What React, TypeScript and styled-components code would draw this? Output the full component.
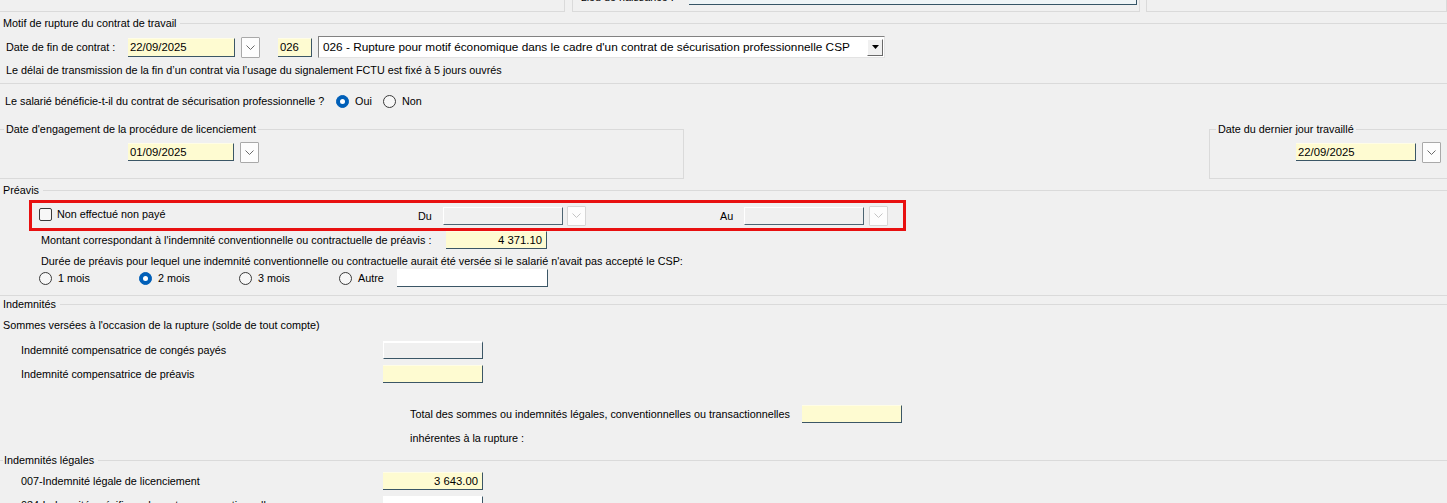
import React from "react";
import styled, { createGlobalStyle, css } from "styled-components";

const GlobalStyle = createGlobalStyle`
  html, body {
    margin: 0;
    padding: 0;
    background: #f0f0f0;
  }
  body {
    font-family: "Liberation Sans", Arial, sans-serif;
    font-size: 10.8px;
    color: #000;
  }
`;

const Page = styled.div`
  width: 1447px;
  height: 503px;
  overflow: hidden;
  background: #f0f0f0;
  display: flex;
  flex-direction: column;
`;

/* ---------- top strip (end of previous panels) ---------- */

const TopStrip = styled.div`
  height: 12px;
  display: flex;
  overflow: hidden;
  flex-shrink: 0;
`;

const Panel = styled.div<{ $w: number; $ml?: number; $left?: boolean }>`
  width: ${(p) => p.$w}px;
  margin-left: ${(p) => p.$ml ?? 0}px;
  height: 11px;
  border-bottom: 1px solid #dadada;
  border-right: 1px solid #dadada;
  ${(p) => p.$left && "border-left: 1px solid #dadada;"}
  box-sizing: content-box;
  display: flex;
  align-items: flex-end;
  overflow: hidden;
`;

const BirthRow = styled.div`
  display: flex;
  align-items: flex-end;
  height: 20px;
  margin-bottom: 6px;
  padding-left: 8px;
  white-space: nowrap;
`;

const BirthLabel = styled.span`
  width: 108px;
  line-height: 14px;
  margin-bottom: 1px;
`;

const BirthInput = styled.div`
  width: 447px;
  height: 18px;
  background: #eef4f6;
  border-right: 1px solid #355466;
  border-bottom: 1px solid #355466;
`;

/* ---------- group titles & separators ---------- */

const TitleRow = styled.div<{ $mt: number }>`
  display: flex;
  align-items: center;
  height: 14px;
  margin-top: ${(p) => p.$mt}px;
  flex-shrink: 0;
`;

const TitleText = styled.span<{ $lead: number }>`
  white-space: nowrap;
  padding: 0 4px 0 ${(p) => (p.$lead ? 1 : 3)}px;
  line-height: 14px;
`;

const Rule = styled.div<{ $w?: number }>`
  height: 1px;
  background: #dadada;
  ${(p) => (p.$w !== undefined ? `width: ${p.$w}px;` : "flex: 1;")}
`;

const Separator = styled.div<{ $mt: number }>`
  height: 1px;
  background: #dadada;
  margin-top: ${(p) => p.$mt}px;
  flex-shrink: 0;
`;

/* ---------- rows & text ---------- */

const Row = styled.div<{ $mt: number; $h?: number; $pl?: number }>`
  display: flex;
  align-items: center;
  margin-top: ${(p) => p.$mt}px;
  height: ${(p) => p.$h ?? 14}px;
  padding-left: ${(p) => p.$pl ?? 0}px;
  white-space: nowrap;
  flex-shrink: 0;
`;

const Label = styled.span<{ $w?: number }>`
  line-height: 14px;
  ${(p) => p.$w !== undefined && `width: ${p.$w}px; flex-shrink: 0;`}
`;

const Gap = styled.span<{ $w: number }>`
  width: ${(p) => p.$w}px;
  flex-shrink: 0;
`;

/* ---------- inputs ---------- */

type Tone = "yellow" | "white" | "disabled" | "gray";

const Field = styled.div<{ $w: number; $h?: number; $tone: Tone; $right?: boolean }>`
  width: ${(p) => p.$w}px;
  height: ${(p) => p.$h ?? 18}px;
  box-sizing: border-box;
  flex-shrink: 0;
  display: flex;
  align-items: center;
  justify-content: ${(p) => (p.$right ? "flex-end" : "flex-start")};
  padding: 0 4px 0 2px;
  line-height: 14px;
  font-size: 11.3px;
  border-right: 1px solid #3b5666;
  border-bottom: 1px solid #3b5666;
  border-top: 1px solid transparent;
  ${(p) =>
    p.$tone === "yellow" &&
    css`
      background: #fefbd1;
      border-top-color: #fffde6;
    `}
  ${(p) =>
    p.$tone === "white" &&
    css`
      background: #ffffff;
    `}
  ${(p) =>
    p.$tone === "gray" &&
    css`
      background: #f0f0f0;
      border-top: 2px solid #ffffff;
      border-left: 1px solid #ffffff;
    `}
  ${(p) =>
    p.$tone === "disabled" &&
    css`
      background: #f0f0f0;
      border-top: 1px solid #ffffff;
      border-left: 1px solid #ffffff;
      border-right-color: #4c6472;
      border-bottom-color: #4c6472;
    `}
`;

const DropButton = styled.div<{ $off?: boolean; $h?: number }>`
  width: 19px;
  height: ${(p) => p.$h ?? 21}px;
  box-sizing: border-box;
  flex-shrink: 0;
  background: #fdfdfd;
  border: 1px solid ${(p) => (p.$off ? "#d6d6d6" : "#a9a9a9")};
  border-radius: 1px;
  display: flex;
  align-items: center;
  justify-content: center;
  svg {
    stroke: ${(p) => (p.$off ? "#c4c4c4" : "#6a6a6a")};
  }
`;

const Chevron = () => (
  <svg width="9" height="5" viewBox="0 0 9 5" fill="none" strokeWidth="1">
    <polyline points="0.5,0.5 4.5,4.5 8.5,0.5" />
  </svg>
);

const DateButton = ({ off, h }: { off?: boolean; h?: number }) => (
  <DropButton $off={off} $h={h}>
    <Chevron />
  </DropButton>
);

const Combo = styled.div`
  width: 567px;
  height: 22px;
  box-sizing: border-box;
  background: #fff;
  border-top: 1px solid #828282;
  border-left: 1px solid #828282;
  border-right: 1px solid #e3e3e3;
  border-bottom: 1px solid #e3e3e3;
  display: flex;
  align-items: center;
  justify-content: space-between;
  padding: 0 1px 0 4px;
  flex-shrink: 0;
  font-size: 11.8px;
`;

const ComboArrow = styled.div`
  width: 16px;
  height: 17px;
  box-sizing: border-box;
  background: #f0f0f0;
  border-top: 1px solid #ffffff;
  border-left: 1px solid #ffffff;
  border-right: 1px solid #696969;
  border-bottom: 1px solid #696969;
  display: flex;
  align-items: center;
  justify-content: center;
`;

/* ---------- radios & checkbox ---------- */

const RadioDot = styled.span<{ $on?: boolean }>`
  width: 13px;
  height: 13px;
  box-sizing: border-box;
  border-radius: 50%;
  flex-shrink: 0;
  border: 1px solid ${(p) => (p.$on ? "#005fb8" : "#3a3a3a")};
  background: ${(p) => (p.$on ? "#005fb8" : "#f7f7f7")};
  display: flex;
  align-items: center;
  justify-content: center;
  &::after {
    content: "";
    width: 5px;
    height: 5px;
    border-radius: 50%;
    background: #fff;
    display: ${(p) => (p.$on ? "block" : "none")};
  }
`;

const RadioOption = styled.span<{ $w?: number }>`
  display: inline-flex;
  align-items: center;
  gap: 6px;
  ${(p) => p.$w !== undefined && `width: ${p.$w}px; flex-shrink: 0;`}
`;

const Radio = ({ on, label, w }: { on?: boolean; label: string; w?: number }) => (
  <RadioOption $w={w}>
    <RadioDot $on={on} />
    <Label>{label}</Label>
  </RadioOption>
);

const CheckBox = styled.span`
  width: 13px;
  height: 13px;
  box-sizing: border-box;
  border: 1px solid #3a3a3a;
  border-radius: 2px;
  background: #f7f7f7;
  flex-shrink: 0;
`;

/* ---------- group boxes ---------- */

const BoxRow = styled.div`
  display: flex;
  justify-content: space-between;
  margin-top: 21px;
  flex-shrink: 0;
`;

const GroupBox = styled.div<{ $w: number; $ml?: number; $mr?: number }>`
  width: ${(p) => p.$w}px;
  height: 50px;
  box-sizing: border-box;
  margin-left: ${(p) => p.$ml ?? 0}px;
  margin-right: ${(p) => p.$mr ?? 0}px;
  border: 1px solid #dadada;
  display: flex;
  flex-direction: column;
`;

const Legend = styled.span<{ $ml: number }>`
  align-self: flex-start;
  margin: -8px 0 0 ${(p) => p.$ml}px;
  padding: 0 2px;
  background: #f0f0f0;
  line-height: 14px;
  white-space: nowrap;
`;

/* ---------- highlight frame ---------- */

const Highlight = styled.div`
  margin: 3px 0 0 29px;
  width: 877px;
  height: 31px;
  box-sizing: border-box;
  border: 3px solid #e81010;
  display: flex;
  align-items: center;
  flex-shrink: 0;
  white-space: nowrap;
`;

const CheckOption = styled.span`
  align-self: flex-start;
  margin: 4px 0 0 7px;
  width: 379px;
  display: inline-flex;
  align-items: center;
  gap: 5px;
  flex-shrink: 0;
`;

export default function App() {
  return (
    <>
      <GlobalStyle />
      <Page>
        <TopStrip>
          <Panel $w={567} $ml={-1} />
          <Panel $w={569} $ml={7} $left>
            <BirthRow>
              <BirthLabel>Lieu de naissance :</BirthLabel>
              <BirthInput />
            </BirthRow>
          </Panel>
          <Panel $w={300} $ml={6} $left />
        </TopStrip>

        <TitleRow $mt={4}>
          <TitleText $lead={0}>Motif de rupture du contrat de travail</TitleText>
          <Rule />
        </TitleRow>

        <Row $mt={6} $h={22} $pl={6}>
          <Label $w={122}>Date de fin de contrat :</Label>
          <Field $tone="yellow" $w={107} $h={19}>22/09/2025</Field>
          <Gap $w={6} />
          <DateButton />
          <Gap $w={18} />
          <Field $tone="yellow" $w={34} $h={19}>026</Field>
          <Gap $w={6} />
          <Combo>
            <span>
              026 - Rupture pour motif économique dans le cadre d'un contrat de sécurisation
              professionnelle CSP
            </span>
            <ComboArrow>
              <svg width="7" height="4" viewBox="0 0 7 4">
                <polygon points="0,0 7,0 3.5,4" fill="#000" />
              </svg>
            </ComboArrow>
          </Combo>
        </Row>

        <Row $mt={5} $pl={6}>
          <Label>
            Le délai de transmission de la fin d’un contrat via l’usage du signalement FCTU est
            fixé à 5 jours ouvrés
          </Label>
        </Row>

        <Separator $mt={6} />

        <Row $mt={10} $pl={5}>
          <Label $w={331}>Le salarié bénéficie-t-il du contrat de sécurisation professionnelle ?</Label>
          <Radio on label="Oui" w={47} />
          <Radio label="Non" />
        </Row>

        <BoxRow>
          <GroupBox $w={685} $ml={-1}>
            <Legend $ml={4}>Date d'engagement de la procédure de licenciement</Legend>
            <Row $mt={6} $h={20} $pl={128}>
              <Field $tone="yellow" $w={106}>01/09/2025</Field>
              <Gap $w={6} />
              <DateButton />
            </Row>
          </GroupBox>
          <GroupBox $w={240} $mr={-2}>
            <Legend $ml={6}>Date du dernier jour travaillé</Legend>
            <Row $mt={6} $h={20} $pl={86}>
              <Field $tone="yellow" $w={120}>22/09/2025</Field>
              <Gap $w={6} />
              <DateButton />
            </Row>
          </GroupBox>
        </BoxRow>

        <TitleRow $mt={4}>
          <TitleText $lead={0}>Préavis</TitleText>
          <Rule />
        </TitleRow>

        <Highlight>
          <CheckOption>
            <CheckBox />
            <Label>Non effectué non payé</Label>
          </CheckOption>
          <Label $w={25}>Du</Label>
          <Field $tone="disabled" $w={120}></Field>
          <Gap $w={4} />
          <DateButton off h={20} />
          <Gap $w={134} />
          <Label $w={24}>Au</Label>
          <Field $tone="disabled" $w={120}></Field>
          <Gap $w={5} />
          <DateButton off h={20} />
        </Highlight>

        <Row $mt={0} $h={18} $pl={41}>
          <Label $w={405}>
            Montant correspondant à l'indemnité conventionnelle ou contractuelle de préavis :
          </Label>
          <Field $tone="yellow" $w={101} $right>4 371.10</Field>
        </Row>

        <Row $mt={5} $pl={41}>
          <Label>
            Durée de préavis pour lequel une indemnité conventionnelle ou contractuelle aurait été
            versée si le salarié n'avait pas accepté le CSP:
          </Label>
        </Row>

        <Row $mt={1} $h={18} $pl={39}>
          <Radio label="1 mois" w={100} />
          <Radio on label="2 mois" w={100} />
          <Radio label="3 mois" w={100} />
          <Radio label="Autre" w={58} />
          <Field $tone="white" $w={151}></Field>
        </Row>

        <Separator $mt={8} />

        <TitleRow $mt={1}>
          <TitleText $lead={0}>Indemnités</TitleText>
          <Rule />
        </TitleRow>

        <Row $mt={7} $pl={3}>
          <Label>Sommes versées à l'occasion de la rupture (solde de tout compte)</Label>
        </Row>

        <Row $mt={9} $h={18} $pl={21}>
          <Label $w={362}>Indemnité compensatrice de congés payés</Label>
          <Field $tone="gray" $w={100}></Field>
        </Row>

        <Row $mt={6} $h={18} $pl={21}>
          <Label $w={362}>Indemnité compensatrice de préavis</Label>
          <Field $tone="yellow" $w={100}></Field>
        </Row>

        <Row $mt={22} $h={18} $pl={410}>
          <Label $w={392}>
            Total des sommes ou indemnités légales, conventionnelles ou transactionnelles
          </Label>
          <Field $tone="yellow" $w={100}></Field>
        </Row>

        <Row $mt={8} $pl={410}>
          <Label>inhérentes à la rupture :</Label>
        </Row>

        <TitleRow $mt={8}>
          <Rule $w={3} />
          <TitleText $lead={1}>Indemnités légales</TitleText>
          <Rule />
        </TitleRow>

        <Row $mt={5} $h={18} $pl={21}>
          <Label $w={362}>007-Indemnité légale de licenciement</Label>
          <Field $tone="yellow" $w={100} $right>3 643.00</Field>
        </Row>

        <Row $mt={6} $h={18} $pl={21}>
          <Label $w={362}>034-Indemnité spécifique de rupture conventionnelle</Label>
          <Field $tone="white" $w={100}></Field>
        </Row>
      </Page>
    </>
  );
}
